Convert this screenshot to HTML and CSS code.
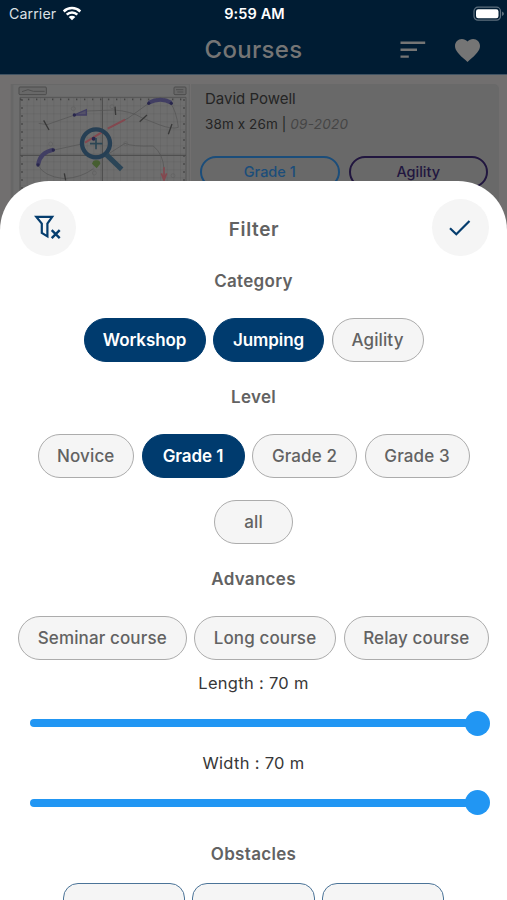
FILE: index.html
```html
<!DOCTYPE html>
<html lang="en">
<head>
<meta charset="utf-8">
<title>Courses</title>
<link rel="stylesheet" href="styles.css">
</head>
<body>
<div class="app">
  <div class="backdrop">
    <header class="header">
      <div class="status">
        <div class="status-left"><span class="carrier">Carrier</span>
          <svg class="wifi" width="20" height="15" viewBox="0 0 20 15"><path d="M1.7 5.5a11.8 11.8 0 0 1 16.6 0M4.7 8.6a7.5 7.5 0 0 1 10.6 0" fill="none" stroke="#fff" stroke-width="2.5"/><path d="M6.7 11a4.7 4.7 0 0 1 6.6 0L10 14.3z" fill="#fff"/></svg>
        </div>
        <div class="clock">9:59 AM</div>
        <svg class="battery" width="32" height="16" viewBox="0 0 32 16"><rect x="1" y="1.2" width="26.5" height="13" rx="4" fill="none" stroke="#5d6f7e" stroke-width="1.2"/><rect x="3" y="3.2" width="22.5" height="9" rx="2.2" fill="#fff"/><path d="M29 5.4q2 .7 2 2.3t-2 2.3z" fill="#5d6f7e"/></svg>
      </div>
      <div class="bar">
        <h1>Courses</h1>
        <svg class="sort" width="26" height="18" viewBox="0 0 26 18"><path d="M.5 1.8h24.7M.5 8.8h16.5M.5 15.6h8.3" stroke="#757575" stroke-width="2.4"/></svg>
        <svg class="heart" width="25" height="23" viewBox="2 3 20 18.35" preserveAspectRatio="none"><path d="m12 21.35-1.45-1.32C5.4 15.36 2 12.28 2 8.5 2 5.42 4.42 3 7.5 3c1.74 0 3.41.81 4.5 2.09C13.09 3.81 14.76 3 16.5 3 19.58 3 22 5.42 22 8.5c0 3.78-3.4 6.86-8.55 11.54z" fill="#757575"/></svg>
      </div>
    </header>
    <article class="course">
      <svg class="plan" width="190" height="146" viewBox="0 30 570 438">
        <defs><pattern id="grid" x="60" y="70" width="20" height="24" patternUnits="userSpaceOnUse"><path d="M0 0V24M0 0H20" stroke="#5a5a5a" stroke-width="2" fill="none"/></pattern></defs>
        <path d="M32 30H570V468H32z" fill="#676767"/>
        <path d="M40 32H566V468H40z" fill="#6e6e6e"/>
        <rect x="60" y="70" width="498" height="398" fill="url(#grid)"/>
        <path d="M60 70H558V468M60 70V468" fill="none" stroke="#555" stroke-width="3"/>
        <path d="M60 76H558M66 76V468M552 76V468" stroke="#444" stroke-width="5" stroke-dasharray="4 20" fill="none"/>
        <path d="M60 244H558M307 70V468" stroke="#4a4a4a" stroke-width="3"/>
        <g fill="#686868" stroke="#4c4c4c" stroke-width="3"><rect x="57" y="39" width="82" height="23" rx="3"/><rect x="522" y="39" width="36" height="23" rx="3"/></g>
        <path d="M66 53l18-6 16 5h34M528 47h22M532 54h18" stroke="#505050" stroke-width="3" fill="none"/>
        <g fill="none" stroke="#535353" stroke-width="2">
          <path d="M116 148l25 4 80-28 40-13 80-3q52 3 86 24l50 20q40 15 58 8-6-50-24-73M446 88L385 132 330 161M245 210l-83 18M114 273q16 34 78 41 53-3 88-30M325 240l50-32M375 208q20 10 85 8 30 25 32 70"/>
        </g>
        <g stroke="#383838" stroke-width="4"><path d="M131 139l16 29M419 143l22-20M505 181l11-31M193 298l4 21M345 98l2 25"/></g>
        <g fill="none" stroke="#413e63" stroke-width="12"><path d="M446 86q36-18 68 0M114 273q5-38 46-46"/></g>
        <path d="M222 123l37-16v16z" fill="#545168" stroke="#413e63" stroke-width="4"/>
        <path d="M255 206l50-31M323 164l52-27" stroke="#84484f" stroke-width="6"/>
        <path d="M492 280v40M484 298l8 20 8-20" stroke="#84484f" stroke-width="5" fill="none"/>
        <g fill="#28264c"><circle cx="446" cy="88" r="5"/><circle cx="514" cy="88" r="5"/><circle cx="160" cy="228" r="5"/><circle cx="114" cy="273" r="5"/><circle cx="223" cy="123" r="5"/><circle cx="281" cy="194" r="6"/></g>
        <circle cx="288" cy="208" r="42" fill="none" stroke="#263f54" stroke-width="13"/>
        <path d="M270 209h37M288 192v34" stroke="#2c4654" stroke-width="5"/>
        <path d="M319 242l46 44" stroke="#2b4557" stroke-width="15"/>
        <path d="M276 269q4-12 13-10 11-2 12 10l-11 14z" fill="#465e31"/>
        <g fill="none" stroke="#606060" stroke-width="2"><circle cx="336" cy="98" r="6"/><circle cx="152" cy="210" r="6"/><circle cx="377" cy="209" r="6"/><circle cx="519" cy="305" r="6"/><circle cx="283" cy="297" r="6"/><circle cx="220" cy="104" r="6"/></g>
      </svg>
      <div class="info">
        <div class="author">David Powell</div>
        <div class="size">38m x 26m | <i>09-2020</i></div>
        <div class="tags"><span class="tag blue">Grade 1</span><span class="tag purple">Agility</span></div>
      </div>
    </article>
  </div>

  <main class="sheet">
    <div class="sheet-head">
      <button class="round" aria-label="Clear filters"><svg width="28" height="26" viewBox="0 0 28 26" fill="none" stroke="#053d6e"><path d="M2.2 1.8H18.2L13.4 8.6V21.4L7.8 18V8.6z" stroke-width="2.2"/><path d="M17.7 15.2l8 8M25.7 15.2l-8 8" stroke-width="2.4"/></svg></button>
      <h2>Filter</h2>
      <button class="round" aria-label="Apply"><svg width="24" height="20" viewBox="0 0 24 20"><path d="M2 10.2l6.3 6L21.5 3" fill="none" stroke="#053d6e" stroke-width="2.2"/></svg></button>
    </div>
    <h3 class="category">Category</h3>
    <div class="chips">
      <button class="chip on w122">Workshop</button><button class="chip on w111">Jumping</button><button class="chip w92">Agility</button>
    </div>
    <h3 class="level">Level</h3>
    <div class="chips levels">
      <button class="chip w97">Novice</button><button class="chip on w103">Grade 1</button><button class="chip w105">Grade 2</button><button class="chip w105">Grade 3</button><button class="chip w78">all</button>
    </div>
    <h3 class="advances">Advances</h3>
    <div class="chips">
      <button class="chip w169">Seminar course</button><button class="chip w142">Long course</button><button class="chip w145">Relay course</button>
    </div>
    <div class="range-label">Length : 70 m</div>
    <div class="slider"><span class="track"></span><span class="thumb"></span></div>
    <div class="range-label width">Width : 70 m</div>
    <div class="slider"><span class="track"></span><span class="thumb"></span></div>
    <h3 class="obstacles">Obstacles</h3>
    <div class="boxes"><span class="box"></span><span class="box"></span><span class="box"></span></div>
  </main>
</div>
</body>
</html>
```
FILE: styles.css
```css
* { box-sizing: border-box; }
body { margin: 0; font-family: Inter, "Liberation Sans", sans-serif; background: #fff; }
h1, h2, h3 { margin: 0; }
button { font: inherit; border: 0; padding: 0; }
svg { display: block; flex: none; }
.app { height: 900px; overflow: hidden; background: #716f6f; }
.backdrop { height: 181px; }
.header { height: 74px; background: #001c33; }
.status { height: 28px; display: grid; grid-template-columns: 1fr auto 1fr; align-items: center; color: #fff; padding: 0 7px 0 9px; }
.status-left { display: flex; align-items: center; gap: 6px; }
.carrier { font-size: 14.2px; letter-spacing: .1px; color: #dce1e5; margin-top: -1px; }
.wifi { margin-top: -2px; }
.clock { font-size: 14.5px; font-weight: 600; letter-spacing: .1px; margin-top: -1px; }
.battery { justify-self: end; margin-right: -5px; margin-top: -1px; }
.bar { height: 46px; display: grid; grid-template-columns: 400px 58px 49px; align-items: center; }
.bar h1 { text-align: center; padding-left: 107px; font-size: 24px; line-height: 30px; font-weight: 500; letter-spacing: .3px; color: #757575; margin-top: -2px; }
.sort { margin-top: -2px; }
.heart { margin-left: -3px; margin-top: -2px; }
.course { display: flex; height: 156px; padding-top: 9px; border-top: 1px solid #3f5262; }
.info { width: 308px; margin-left: 1px; padding: 5px 11px 0 9px; background: #696969; border-radius: 0 5px 0 0; }
.author { font-size: 15px; line-height: 20px; padding-left: 5px; color: #242424; }
.size { font-size: 13.5px; line-height: 20px; margin-top: 5px; padding-left: 5px; color: #242424; letter-spacing: .1px; }
.size i { color: #454545; letter-spacing: .3px; }
.tags { display: flex; gap: 9px; margin-top: 22px; }
.tag { flex: 1; height: 32px; border: 2px solid; border-radius: 16px; text-align: center; font-size: 14.5px; line-height: 27px; font-weight: 500; }
.blue { color: #1b4d7a; }
.purple { color: #21163f; }
.sheet { position: relative; height: 719px; padding-top: 18px; background: #fff; border-radius: 49px 49px 0 0; color: #626262; }
.sheet-head { display: flex; justify-content: space-between; align-items: center; padding: 0 18px 0 19px; height: 57px; }
.round { width: 57px; height: 57px; border-radius: 50%; background: #f5f5f5; display: grid; place-items: center; }
h2 { font-size: 19px; line-height: 24px; font-weight: 600; letter-spacing: .6px; padding-top: 4px; }
h3 { font-size: 17px; line-height: 24px; height: 24px; text-align: center; font-weight: 600; letter-spacing: .3px; }
.category { margin: 13px 0 24.5px; }
.chips { display: flex; flex-wrap: wrap; justify-content: center; gap: 22px 7.5px; }
.chip { height: 44px; border: 1.5px solid #acacac; border-radius: 22px; background: #f5f5f5; color: #626262; font-size: 17px; font-weight: 500; letter-spacing: .12px; white-space: nowrap; }
.on { background: #003b6e; border-color: #003b6e; color: #fff; font-weight: 600; letter-spacing: -.1px; }
.w122 { width: 122px; } .w111 { width: 111px; } .w92 { width: 92px; }
.w97 { width: 96.5px; } .w103 { width: 103px; } .w105 { width: 105px; } .w78 { width: 78.5px; }
.w169 { width: 168.5px; } .w142 { width: 142px; } .w145 { width: 145.5px; }
.level { margin: 23.5px 0 25px; }
.advances { margin: 23px 0 25px; }
.range-label { height: 24px; margin-top: 11px; text-align: center; font-size: 16.5px; line-height: 24px; letter-spacing: .3px; color: #373737; }
.slider { height: 26px; margin-top: 15px; padding: 0 17px 0 30px; display: flex; align-items: center; }
.track { flex: 1; height: 8px; background: #2196f3; border-radius: 4px; margin-right: -4px; }
.thumb { width: 25px; height: 25px; border-radius: 50%; background: #2196f3; }
.width { margin-top: 14.5px; }
.obstacles { margin: 26.5px 0 17px; }
.boxes { display: flex; justify-content: center; gap: 7px; }
.box { width: 122.5px; height: 60px; border: 1.5px solid #4b7498; border-radius: 15px; background: #f5f5f5; }
```
